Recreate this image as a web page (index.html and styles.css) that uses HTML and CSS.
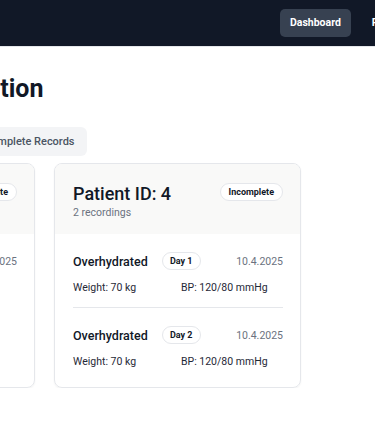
FILE: index.html
```html
<!DOCTYPE html>
<html lang="en">
<head>
<meta charset="utf-8">
<title>Patient Information</title>
<link rel="stylesheet" href="styles.css">
</head>
<body>
<nav class="nav">
  <div class="nav-links">
    <a class="nav-link active">Dashboard</a>
    <a class="nav-link">Forms</a>
  </div>
</nav>
<main class="main">
  <h1 class="title">Patient Information</h1>
  <div class="filters">
    <button class="filter">All Records</button>
    <button class="filter">Incomplete Records</button>
  </div>
  <div class="cards">
    <section class="card">
      <header class="card-head">
        <div>
          <h2 class="pid">Patient ID: 3</h2>
          <div class="count">1 recording</div>
        </div>
        <span class="badge">Incomplete</span>
      </header>
      <div class="card-body">
        <div class="rec">
          <div class="rec-top">
            <span class="cond">Normal</span>
            <span class="day">Day 1</span>
            <span class="date">10.4.2025</span>
          </div>
          <div class="rec-vals">
            <span>Weight: 68 kg</span>
            <span>BP: N/A</span>
          </div>
        </div>
      </div>
    </section>
    <section class="card">
      <header class="card-head">
        <div>
          <h2 class="pid">Patient ID: 4</h2>
          <div class="count">2 recordings</div>
        </div>
        <span class="badge">Incomplete</span>
      </header>
      <div class="card-body">
        <div class="rec">
          <div class="rec-top">
            <span class="cond">Overhydrated</span>
            <span class="day">Day 1</span>
            <span class="date">10.4.2025</span>
          </div>
          <div class="rec-vals">
            <span>Weight: 70 kg</span>
            <span>BP: 120/80 mmHg</span>
          </div>
        </div>
        <div class="rec">
          <div class="rec-top">
            <span class="cond">Overhydrated</span>
            <span class="day">Day 2</span>
            <span class="date">10.4.2025</span>
          </div>
          <div class="rec-vals">
            <span>Weight: 70 kg</span>
            <span>BP: 120/80 mmHg</span>
          </div>
        </div>
      </div>
    </section>
  </div>
</main>
</body>
</html>
```

FILE: styles.css
```css
* { box-sizing: border-box; }
html, body { margin: 0; padding: 0; overflow: hidden; }
body {
  font-family: "Roboto", "Noto Sans", sans-serif;
  color: #111827;
  background: #ffffff;
  width: 375px;
}
.nav {
  height: 47px;
  background: #111827;
  border-bottom: 1px solid #e5e7eb;
  overflow: hidden;
}
.nav-links {
  display: flex;
  gap: 11px;
  padding: 9px 0 0 280px;
  white-space: nowrap;
}
.nav-link {
  display: block;
  color: #ffffff;
  font-size: 10.5px;
  font-weight: 700;
  padding: 0 10px;
  height: 28px;
  line-height: 28px;
  border-radius: 5px;
}
.nav-link.active { background: #374151; }
.main {
  margin-left: -212px;
  width: 800px;
}
.title {
  font-size: 25px;
  font-weight: 700;
  margin: 26px 0 0;
  padding-left: 37px;
  line-height: 32px;
}
.filters {
  display: flex;
  gap: 8px;
  margin-top: 22px;
  padding-left: 88px;
}
.filter {
  font-family: inherit;
  border: none;
  background: #f3f4f6;
  color: #4b5563;
  font-size: 11px;
  font-weight: 500;
  height: 29px;
  padding: 0 12px;
  border-radius: 6px;
}
.cards {
  display: flex;
  gap: 19px;
  margin-top: 7px;
  align-items: flex-start;
}
.card {
  width: 247px;
  border: 1px solid #e5e7eb;
  border-radius: 8px;
  overflow: hidden;
  box-shadow: 0 1px 2px rgba(0,0,0,0.05);
  height: 225px;
}
.card-head {
  background: #f9f9f8;
  display: flex;
  justify-content: space-between;
  align-items: flex-start;
  padding: 18px 17px 20px 18px;
  height: 70px;
}
.pid {
  margin: 0;
  font-size: 18px;
  font-weight: 500;
  line-height: 24px;
}
.count {
  font-size: 10.5px;
  color: #6b7280;
  line-height: 13px;
}
.badge {
  margin-top: 1px;
  font-size: 9px;
  font-weight: 700;
  border: 1px solid #e5e7eb;
  background: #fff;
  border-radius: 999px;
  padding: 0 8px;
  height: 18px;
  line-height: 16px;
}
.card-body {
  padding: 0 17px 0 18px;
}
.rec { padding: 18px 0 13px; }
.rec + .rec { border-top: 1px solid #e5e7eb; padding-top: 18px; }
.rec-top {
  display: flex;
  align-items: center;
  height: 18px;
}
.cond {
  font-size: 12.5px;
  font-weight: 500;
  width: 89px;
}
.day {
  font-size: 9px;
  font-weight: 700;
  border: 1px solid #e5e7eb;
  border-radius: 999px;
  padding: 0 7px;
  height: 18px;
  line-height: 16px;
}
.date {
  margin-left: auto;
  font-size: 10.5px;
  color: #6b7280;
}
.rec-vals {
  display: flex;
  margin-top: 11px;
  font-size: 10.5px;
  color: #1f2937;
}
.rec-vals span:first-child { width: 108px; }
```
